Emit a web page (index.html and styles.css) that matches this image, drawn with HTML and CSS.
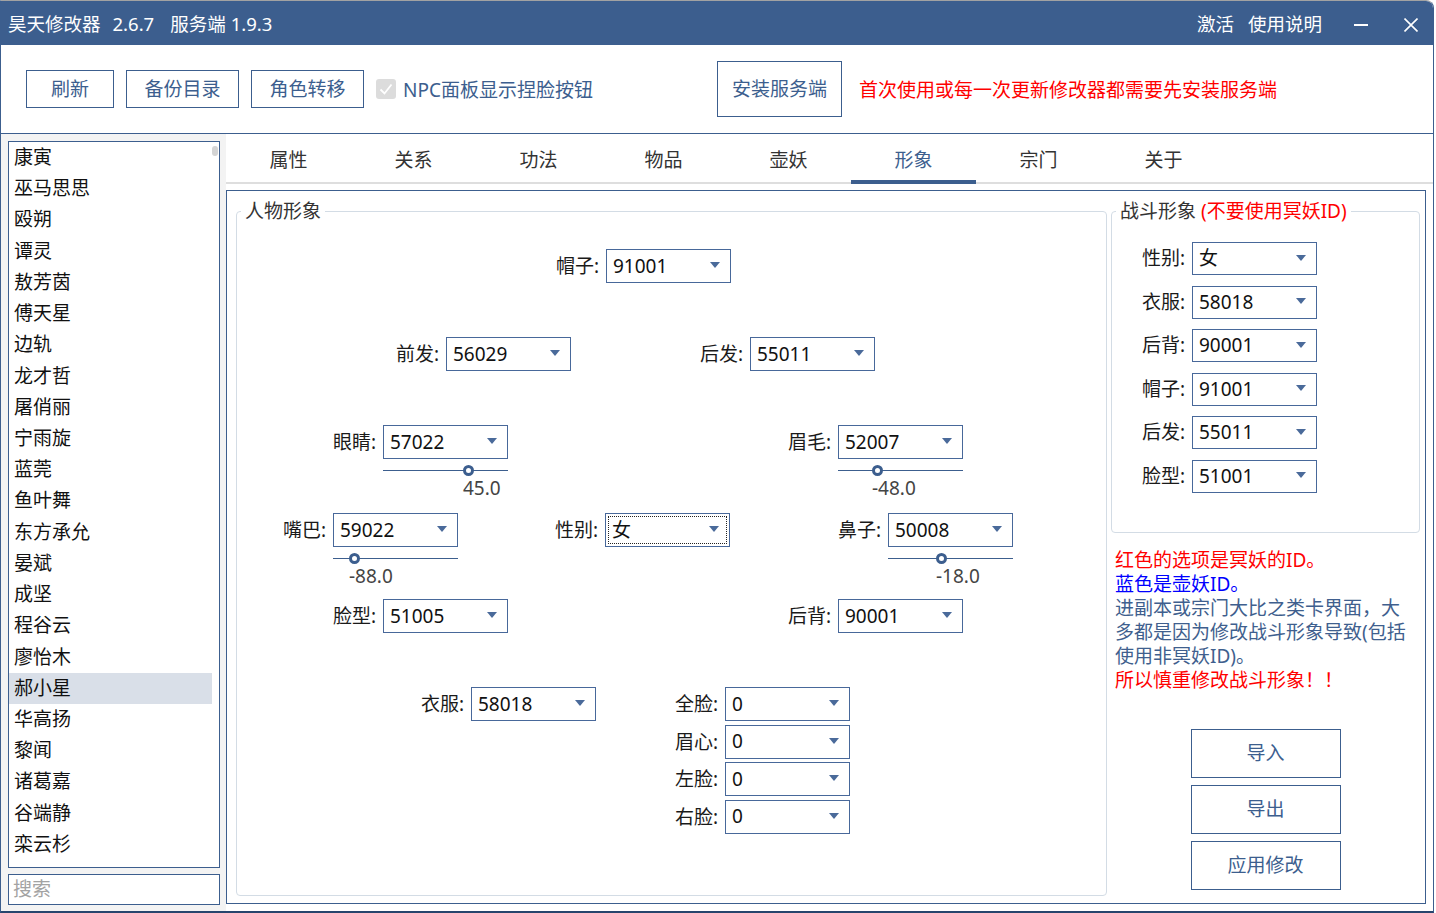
FILE: index.html
```html
<!DOCTYPE html>
<html lang="zh-CN">
<head>
<meta charset="utf-8">
<title>昊天修改器</title>
<link rel="stylesheet" href="styles.css">
</head>
<body>
<div class="window">
  <header class="titlebar">
    <div class="title"><span>昊天修改器</span><span class="t-ver">2.6.7</span><span class="t-srv">服务端</span><span class="t-srvver">1.9.3</span></div>
    <div class="tb-actions">
      <span>激活</span>
      <span class="tb-help">使用说明</span>
      <span class="tb-min"></span>
      <svg class="tb-close" width="14" height="14" viewBox="0 0 14 14"><path d="M0.5 0.5 L13.5 13.5 M13.5 0.5 L0.5 13.5" stroke="#fff" stroke-width="1.6" fill="none"/></svg>
    </div>
  </header>

  <div class="toolbar">
    <button class="btn btn-refresh">刷新</button>
    <button class="btn btn-wide">备份目录</button>
    <button class="btn btn-wide">角色转移</button>
    <label class="check"><span class="box"><svg width="20" height="20" viewBox="0 0 20 20"><path d="M4.5 10.5 L8.5 14.5 L15.5 5.5" stroke="#fff" stroke-width="1.8" fill="none"/></svg></span>NPC面板显示捏脸按钮</label>
    <button class="btn install">安装服务端</button>
    <span class="warn">首次使用或每一次更新修改器都需要先安装服务端</span>
  </div>

  <div class="main">
    <aside class="side">
      <div class="list">
        <div class="items">
          <div class="item">康寅</div>
          <div class="item">巫马思思</div>
          <div class="item">殴朔</div>
          <div class="item">谭灵</div>
          <div class="item">敖芳茵</div>
          <div class="item">傅天星</div>
          <div class="item">边轨</div>
          <div class="item">龙才哲</div>
          <div class="item">屠俏丽</div>
          <div class="item">宁雨旋</div>
          <div class="item">蓝莞</div>
          <div class="item">鱼叶舞</div>
          <div class="item">东方承允</div>
          <div class="item">晏斌</div>
          <div class="item">成坚</div>
          <div class="item">程谷云</div>
          <div class="item">廖怡木</div>
          <div class="item sel">郝小星</div>
          <div class="item">华高扬</div>
          <div class="item">黎闻</div>
          <div class="item">诸葛嘉</div>
          <div class="item">谷端静</div>
          <div class="item">栾云杉</div>
        </div>
        <div class="sbar"><div class="sthumb"></div></div>
      </div>
      <div class="search">搜索</div>
    </aside>

    <section class="tabs">
      <nav class="tabbar">
        <div class="tab">属性</div>
        <div class="tab">关系</div>
        <div class="tab">功法</div>
        <div class="tab">物品</div>
        <div class="tab">壶妖</div>
        <div class="tab active">形象</div>
        <div class="tab">宗门</div>
        <div class="tab">关于</div>
      </nav>

      <div class="panel">
        <fieldset class="group person">
          <legend>人物形象</legend>
          <div class="rows">
            <div class="row r1">
              <div class="field"><span class="lbl">帽子:</span><div class="combo"><span class="v">91001</span><span class="arr"></span></div></div>
            </div>
            <div class="row r2">
              <div class="field"><span class="lbl">前发:</span><div class="combo"><span class="v">56029</span><span class="arr"></span></div></div>
              <div class="field ml-104"><span class="lbl">后发:</span><div class="combo"><span class="v">55011</span><span class="arr"></span></div></div>
            </div>
            <div class="row r3">
              <div class="field"><span class="lbl">眼睛:</span>
                <div class="stack">
                  <div class="combo"><span class="v">57022</span><span class="arr"></span></div>
                  <div class="slider"><div class="knob" style="left:85px"><span class="dot"></span><span class="val">45.0</span></div></div>
                </div>
              </div>
              <div class="field ml-255"><span class="lbl">眉毛:</span>
                <div class="stack">
                  <div class="combo"><span class="v">52007</span><span class="arr"></span></div>
                  <div class="slider"><div class="knob" style="left:39px"><span class="dot"></span><span class="val">-48.0</span></div></div>
                </div>
              </div>
            </div>
            <div class="row r4">
              <div class="field"><span class="lbl">嘴巴:</span>
                <div class="stack">
                  <div class="combo"><span class="v">59022</span><span class="arr"></span></div>
                  <div class="slider"><div class="knob" style="left:21px"><span class="dot"></span><span class="val">-88.0</span></div></div>
                </div>
              </div>
              <div class="field ml-72"><span class="lbl">性别:</span><div class="combo focus"><span class="v">女</span><span class="arr"></span></div></div>
              <div class="field ml-83"><span class="lbl">鼻子:</span>
                <div class="stack">
                  <div class="combo"><span class="v">50008</span><span class="arr"></span></div>
                  <div class="slider"><div class="knob" style="left:53px"><span class="dot"></span><span class="val">-18.0</span></div></div>
                </div>
              </div>
            </div>
            <div class="row r5">
              <div class="field"><span class="lbl">脸型:</span><div class="combo"><span class="v">51005</span><span class="arr"></span></div></div>
              <div class="field ml-255"><span class="lbl">后背:</span><div class="combo"><span class="v">90001</span><span class="arr"></span></div></div>
            </div>
            <div class="row r6">
              <div class="field"><span class="lbl">衣服:</span><div class="combo"><span class="v">58018</span><span class="arr"></span></div></div>
              <div class="stack4 ml-54">
                <div class="field"><span class="lbl">全脸:</span><div class="combo"><span class="v">0</span><span class="arr"></span></div></div>
                <div class="field"><span class="lbl">眉心:</span><div class="combo"><span class="v">0</span><span class="arr"></span></div></div>
                <div class="field"><span class="lbl">左脸:</span><div class="combo"><span class="v">0</span><span class="arr"></span></div></div>
                <div class="field"><span class="lbl">右脸:</span><div class="combo"><span class="v">0</span><span class="arr"></span></div></div>
              </div>
            </div>
          </div>
        </fieldset>

        <div class="rightcol">
          <fieldset class="group battle">
            <legend>战斗形象 <span class="red">(不要使用冥妖ID)</span></legend>
            <div class="battle-fields">
              <div class="field"><span class="lbl">性别:</span><div class="combo"><span class="v">女</span><span class="arr"></span></div></div>
              <div class="field"><span class="lbl">衣服:</span><div class="combo"><span class="v">58018</span><span class="arr"></span></div></div>
              <div class="field"><span class="lbl">后背:</span><div class="combo"><span class="v">90001</span><span class="arr"></span></div></div>
              <div class="field"><span class="lbl">帽子:</span><div class="combo"><span class="v">91001</span><span class="arr"></span></div></div>
              <div class="field"><span class="lbl">后发:</span><div class="combo"><span class="v">55011</span><span class="arr"></span></div></div>
              <div class="field"><span class="lbl">脸型:</span><div class="combo"><span class="v">51001</span><span class="arr"></span></div></div>
            </div>
          </fieldset>

          <div class="notes">
            <div class="red">红色的选项是冥妖的ID。</div>
            <div class="blue">蓝色是壶妖ID。</div>
            <div class="grey">进副本或宗门大比之类卡界面，大</div>
            <div class="grey">多都是因为修改战斗形象导致(包括</div>
            <div class="grey">使用非冥妖ID)。</div>
            <div class="red">所以慎重修改战斗形象！！</div>
          </div>

          <div class="actions">
            <button class="btn act">导入</button>
            <button class="btn act">导出</button>
            <button class="btn act">应用修改</button>
          </div>
        </div>
      </div>
    </section>
  </div>
</div>
</body>
</html>
```

FILE: styles.css
```css
* { box-sizing: border-box; }
html, body { margin: 0; padding: 0; }
body {
  width: 1436px;
  height: 913px;
  overflow: hidden;
  background: #ffffff;
  font-family: "Noto Sans", "Noto Sans CJK SC", sans-serif;
  font-size: 19px;
  color: #1a1a1a;
}

.window {
  width: 1434px;
  height: 913px;
  display: flex;
  flex-direction: column;
  border: 1px solid #3c5e8e;
  border-top-color: #a2a2a2;
  border-bottom: 2px solid #27456d;
  border-top-right-radius: 8px;
  overflow: hidden;
  background: #fff;
}

/* title bar */
.titlebar {
  height: 44px;
  flex-shrink: 0;
  background: #3c5e8e;
  color: #fff;
  display: flex;
  align-items: center;
  padding: 0 15px 0 7px;
  font-size: 18.5px;
}
.title { display: flex; align-items: center; white-space: nowrap; }
.t-ver { margin-left: 12px; }
.t-srv { margin-left: 16px; }
.t-srvver { margin-left: 5px; }
.tb-actions { margin-left: auto; display: flex; align-items: center; }
.tb-help { margin-left: 14px; }
.tb-min { width: 14px; height: 2px; background: #fff; margin-left: 32px; margin-top: 4px; }
.tb-close { margin-left: 36px; margin-top: 4px; display: block; }

/* toolbar */
.toolbar {
  height: 89px;
  flex-shrink: 0;
  border-bottom: 1px solid #3c5e8e;
  display: flex;
  align-items: center;
  padding-left: 25px;
}
.btn {
  font-family: inherit;
  font-size: 19px;
  color: #3c5e8e;
  background: #fff;
  border: 1px solid #3c5e8e;
  border-radius: 0;
  padding: 0;
  height: 38px;
  line-height: 1;
  cursor: pointer;
}
.btn-refresh { width: 88px; }
.btn-wide { width: 113px; margin-left: 12px; }
.check {
  margin-left: 12px;
  width: 341px;
  display: flex;
  align-items: center;
  color: #3c5e8e;
  white-space: nowrap;
}
.check .box {
  width: 20px;
  height: 20px;
  background: #dcdcdc;
  border-radius: 3px;
  margin-right: 7px;
  display: block;
}
.check .box svg { display: block; }
.install { width: 125px; height: 56px; }
.warn { color: #ff0000; margin-left: 17px; white-space: nowrap; }

/* main */
.main { display: flex; flex: 1; min-height: 0; }

.side {
  width: 225px;
  flex-shrink: 0;
  background: #f3f3f3;
  padding: 7px 0 0 7px;
}
.list {
  width: 212px;
  height: 727px;
  border: 1px solid #3c5e8e;
  background: #fff;
  display: flex;
}
.items { width: 203px; }
.item {
  height: 31.23px;
  line-height: 31.23px;
  padding-left: 5px;
  color: #111;
  white-space: nowrap;
}
.item.sel { background: #d9dfe8; }
.sbar { width: 7px; padding-top: 4px; }
.sthumb { width: 6px; height: 10px; border-radius: 3px; background: #d4d4d4; }
.search {
  margin-top: 6px;
  width: 212px;
  height: 31px;
  border: 1px solid #3c5e8e;
  background: #fff;
  color: #a3a3a3;
  padding-left: 4px;
  line-height: 29px;
}

/* tabs */
.tabs { flex: 1; display: flex; flex-direction: column; background: #fff; }
.tabbar { height: 50px; border-bottom: 2px solid #dedede; display: flex; flex-shrink: 0; }
.tab {
  width: 125px;
  text-align: center;
  padding-top: 4px;
  line-height: 44px;
  color: #333;
  position: relative;
}
.tab.active { color: #3c5e8e; }
.tab.active::after {
  content: "";
  position: absolute;
  left: 0;
  right: 0;
  bottom: -2px;
  height: 4px;
  background: #3c5e8e;
}

.panel {
  margin-top: 6px;
  width: 1200px;
  height: 714px;
  border: 1px solid #3c5e8e;
  display: flex;
  align-items: flex-start;
  padding: 8px 5px 0 9px;
}

.group {
  margin: 0;
  padding: 0;
  min-width: 0;
  border: 1px solid #d3dce5;
  border-radius: 4px;
}
.group legend {
  font-size: 19px;
  line-height: 24px;
  padding: 0 4px;
  margin-left: 4px;
  color: #333;
  white-space: nowrap;
}
.red { color: #ff0000; }
.blue { color: #0000ff; }
.grey { color: #3f5f8e; }

.person { width: 871px; height: 697px; }
.rows { padding-top: 26px; }
.row { display: flex; align-items: flex-start; height: 88px; }
.r1 { padding-left: 294px; }
.r2 { padding-left: 134px; }
.r3, .r5 { padding-left: 71px; }
.r4 { padding-left: 21px; height: 86px; }
.r6 { padding-left: 159px; }
.ml-104 { margin-left: 104px; }
.ml-255 { margin-left: 255px; }
.ml-72 { margin-left: 72px; }
.ml-83 { margin-left: 83px; }
.ml-54 { margin-left: 54px; }

.field { display: flex; align-items: flex-start; }
.lbl {
  width: 68px;
  margin-right: 7px;
  text-align: right;
  line-height: 34px;
  white-space: nowrap;
  color: #1a1a1a;
}
.stack { display: flex; flex-direction: column; }
.stack4 { display: flex; flex-direction: column; gap: 3.5px; }

.combo {
  width: 125px;
  height: 34px;
  border: 1px solid #48689a;
  background: #fff;
  display: flex;
  align-items: center;
  padding: 0 10px 0 6px;
}
.combo .v { flex: 1; color: #111; line-height: 1; }
.combo .arr {
  width: 0;
  height: 0;
  border-left: 5px solid transparent;
  border-right: 5px solid transparent;
  border-top: 6px solid #4a6a9a;
  margin-top: -2px;
}
.combo.focus { position: relative; }
.combo.focus::before {
  content: "";
  position: absolute;
  left: 2px;
  right: 2px;
  top: 2px;
  bottom: 2px;
  border: 1px dotted #222;
}

.slider { position: relative; width: 125px; height: 40px; }
.slider::before {
  content: "";
  position: absolute;
  left: 0;
  right: 0;
  top: 11px;
  height: 1px;
  background: #3c5e8e;
}
.knob { position: absolute; top: 0; }
.knob .dot {
  position: absolute;
  left: -5px;
  top: 6px;
  width: 11px;
  height: 11px;
  border-radius: 50%;
  border: 3px solid #3c5e8e;
  background: #fff;
}
.knob .val {
  position: absolute;
  left: -5px;
  top: 19px;
  line-height: 20px;
  color: #444;
  white-space: nowrap;
}

/* right column */
.rightcol { width: 309px; margin-left: 4px; flex-shrink: 0; }
.battle { width: 309px; height: 334px; }
.battle-fields { padding: 19px 0 0 5px; }
.battle .field { margin-bottom: 10.5px; }
.battle .combo { height: 33px; }
.battle .lbl { line-height: 33px; }

.notes {
  margin-top: 15px;
  padding-left: 4px;
  line-height: 24px;
  white-space: nowrap;
}
.actions {
  margin-top: 37px;
  display: flex;
  flex-direction: column;
  align-items: center;
  gap: 7px;
}
.btn.act { width: 150px; height: 49px; }
```
